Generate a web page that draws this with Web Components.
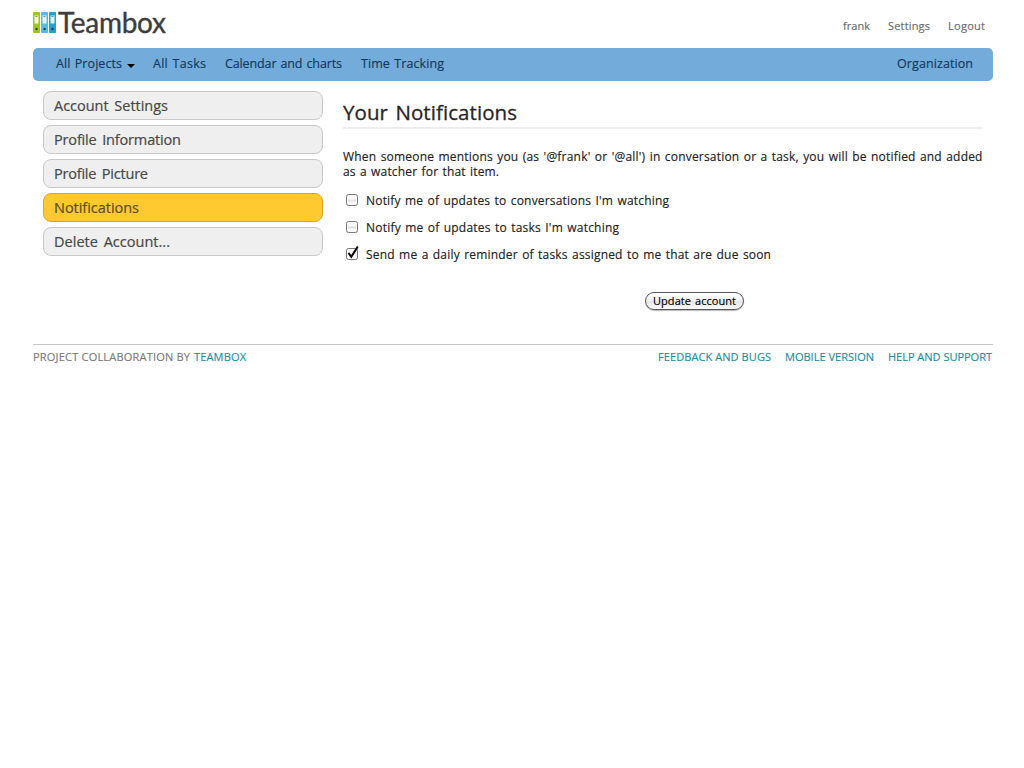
<!DOCTYPE html>
<html lang="en">
<head>
<meta charset="utf-8">
<title>Teambox</title>
<style>
html,body{margin:0;background:#fff}
body{font-family:"Open Sans","Noto Sans",sans-serif;font-size:12px;color:#222}
</style>
</head>
<body>
<tb-page></tb-page>
<script>
const define=(name,html,ready)=>{
  const t=document.createElement('template');t.innerHTML=html;
  customElements.define(name,class extends HTMLElement{
    constructor(){super();this.attachShadow({mode:'open'}).append(t.content.cloneNode(true));}
    connectedCallback(){if(ready)ready.call(this,this.shadowRoot);}
  });
};

/* One line of text, tracked to a given measure. */
define('tb-text',`<style>:host{display:block;white-space:nowrap;word-spacing:var(--ws,1px);-webkit-text-stroke:var(--stroke,.15px) currentColor}span{display:inline-block}</style><span><slot></slot></span>`,function(root){
  const w=+this.getAttribute('w'),s=root.querySelector('span');
  s.style.letterSpacing='0px';
  s.style.letterSpacing=((w-s.getBoundingClientRect().width)/(this.textContent.length-1)).toFixed(3)+'px';
  this.style.width=w+'px';
});

define('tb-logo',`<style>:host{display:flex;height:30px;color:#3d3d3d;font:28px/30px Lato,sans-serif;--ws:0px;--stroke:.35px}svg{display:block;margin:5px 2px 0 0;flex:none}</style>
<svg width="23" height="22" viewBox="0 0 23 22">
<rect width="7" height="21" rx=".7" fill="#9fc61b"/><rect x="1.500" y="3.500" width="4" height="8" fill="#f2f8dc"/><path d="M2.500 4.500h2" stroke="#8b9a66"/><circle cx="3.500" cy="17" r="1.200" fill="#33430d"/>
<rect x="8" width="7" height="21" rx=".7" fill="#55bddb"/><rect x="9.500" y="3.500" width="4" height="8" fill="#e4f6fa"/><path d="M10.500 4.500h2" stroke="#729aa8"/><circle cx="11.500" cy="17" r="1.200" fill="#174657"/>
<rect x="16" width="7" height="21" rx=".7" fill="#1da5cf"/><rect x="17.500" y="3.500" width="4" height="8" fill="#daf1f8"/><path d="M18.500 4.500h2" stroke="#628b9a"/><circle cx="19.500" cy="17" r="1.200" fill="#0c3b4d"/>
</svg><tb-text w="108">Teambox</tb-text>`);

define('tb-header',`<style>:host{display:flex;justify-content:space-between;height:41px;padding:0 8px 0 0;box-sizing:border-box}nav{display:flex;gap:18px;padding-top:11px;font-size:11px;line-height:16px;color:#6b6b6b}</style>
<tb-logo></tb-logo><nav><tb-text w="27">frank</tb-text><tb-text w="42">Settings</tb-text><tb-text w="37">Logout</tb-text></nav>`);

define('tb-nav',`<style>:host{display:flex;height:33px;padding:0 20px 0 23px;border-radius:5px;background:#73abda;color:#12395c;line-height:31px;font-size:12.500px}
svg{margin:16px 18px 0 5px;flex:none}.g{margin-right:19px}.end{margin-left:auto}</style>
<tb-text w="66">All Projects</tb-text><svg width="8" height="4"><path d="M0 0H8L4 4Z" fill="#000"/></svg>
<tb-text class="g" w="53">All Tasks</tb-text><tb-text class="g" w="117">Calendar and charts</tb-text><tb-text w="83">Time Tracking</tb-text><tb-text class="end" w="76">Organization</tb-text>`);

define('tb-tab',`<style>:host{display:block;box-sizing:border-box;height:29px;padding-left:10px;border:1px solid #c9c9c9;border-radius:8px;background:#efefef;color:#484848;font-size:14.500px;line-height:27px;--ws:2px;--stroke:.2px}
:host([active]){background:#ffc92f;border-color:#dda81f;color:#5c4d20}</style><slot></slot>`);

define('tb-sidebar',`<style>:host{display:flex;flex-direction:column;gap:5px;width:280px;flex:none}</style>
<tb-tab><tb-text w="114">Account Settings</tb-text></tb-tab>
<tb-tab><tb-text w="127">Profile Information</tb-text></tb-tab>
<tb-tab><tb-text w="94">Profile Picture</tb-text></tb-tab>
<tb-tab active><tb-text w="85">Notifications</tb-text></tb-tab>
<tb-tab><tb-text w="116">Delete Account...</tb-text></tb-tab>`);

define('tb-check',`<style>:host{display:flex;align-items:center;gap:8px;height:27px;padding-left:3px}
svg{display:block;overflow:visible;flex:none;margin-top:-1px}.m{display:none}:host([checked]) .m{display:block}:host([checked]) .d{display:none}</style>
<svg width="12" height="12"><rect x=".5" y=".5" width="11" height="11" rx="2" fill="#f8f8f8" stroke="#777"/><path class="d" d="M2 6.500h8" stroke="#e4e4e4" stroke-width="2"/><path class="m" d="M2.500 5L5.300 8.800L11.800-1.500" fill="none" stroke="#000" stroke-width="2"/></svg><slot></slot>`);

define('tb-button',`<style>:host{display:block}button{display:block;box-sizing:border-box;width:99px;height:18px;margin:0;padding:0 0 0 7px;border:1px solid #555;border-radius:9px;background:linear-gradient(#fff,#f1f1f1 48%,#e6e6e6 52%,#fafafa);box-shadow:0 1px 1px #bbb;color:#000;font:11px/16px "Open Sans",sans-serif;text-align:left}</style><button><slot></slot></button>`);

define('tb-content',`<style>:host{display:block;width:640px}
h1{margin:0;height:38px;box-sizing:border-box;border-bottom:2px solid #eee;font-size:20.500px;font-weight:400;line-height:42px;color:#262626;--ws:2px;--stroke:.3px}
.p{margin:20px 0 8px;line-height:15px}tb-button{width:99px;margin:24px 0 0 302px}</style>
<h1><tb-text w="174">Your Notifications</tb-text></h1>
<div class="p"><tb-text w="639.500">When someone mentions you (as '@frank' or '@all') in conversation or a task, you will be notified and added</tb-text><tb-text w="156">as a watcher for that item.</tb-text></div>
<tb-check><tb-text w="303">Notify me of updates to conversations I'm watching</tb-text></tb-check>
<tb-check><tb-text w="253">Notify me of updates to tasks I'm watching</tb-text></tb-check>
<tb-check checked><tb-text w="405">Send me a daily reminder of tasks assigned to me that are due soon</tb-text></tb-check>
<tb-button><tb-text w="83">Update account</tb-text></tb-button>`);

define('tb-footer',`<style>:host{display:flex;margin-top:34px;padding:4px 1px 0 0;border-top:1px solid #c8c8c8;font-size:11px;line-height:16px;color:#7b7b7b;--ws:0px}.l{color:#1b8fa3}.r{display:flex;gap:14px;margin-left:auto}.b{margin-left:4px}</style>
<tb-text w="157">PROJECT COLLABORATION BY</tb-text><tb-text class="l b" w="52">TEAMBOX</tb-text>
<div class="l r"><tb-text w="113">FEEDBACK AND BUGS</tb-text><tb-text w="89">MOBILE VERSION</tb-text><tb-text w="104">HELP AND SUPPORT</tb-text></div>`);

define('tb-page',`<style>:host{display:block;width:960px;padding:7px 0 0 33px}main{display:flex;gap:20px;padding:10px 10px 0}</style>
<tb-header></tb-header><tb-nav></tb-nav><main><tb-sidebar></tb-sidebar><tb-content></tb-content></main><tb-footer></tb-footer>`);
</script>
</body>
</html>
